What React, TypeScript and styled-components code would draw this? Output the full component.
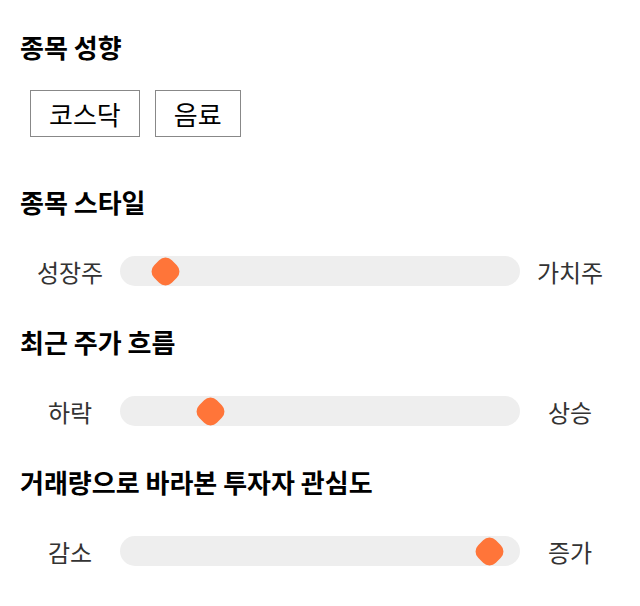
import * as React from 'react'
import styled, { createGlobalStyle } from 'styled-components'

const GlobalStyle = createGlobalStyle`
  body {
    margin: 0;
    background: #fff;
    font-family: "Noto Sans CJK KR", "Noto Sans", sans-serif;
    color: #000;
  }
`

const Page = styled.div`
  padding: 30px 20px 20px;
  width: 600px;
`

const Section = styled.section<{ $gap: number }>`
  display: flex;
  flex-direction: column;
  margin-bottom: ${(p) => p.$gap}px;
`

const Title = styled.h2`
  font-size: 26px;
  font-weight: 700;
  line-height: 34px;
  margin: 0 0 26px;
`

const ChipRow = styled.div`
  display: flex;
  gap: 15px;
  padding: 0 10px;
`

const Chip = styled.button`
  background: #fff;
  border: 1px solid #888;
  color: #000;
  font-family: inherit;
  font-size: 26px;
  height: 47px;
  line-height: 45px;
  padding: 0 18px;
`

const SliderRow = styled.div`
  align-items: center;
  display: grid;
  grid-template-columns: 100px 400px 100px;
  height: 52px;
`

const Label = styled.span`
  color: #333;
  font-size: 24px;
  text-align: center;
`

const Track = styled.div`
  background: #eee;
  border-radius: 15px;
  height: 30px;
  position: relative;
`

const Thumb = styled.div`
  background: #ff7539;
  border-radius: 9px;
  height: 25px;
  margin: -12.5px 0 0 -12.5px;
  position: absolute;
  top: 50%;
  transform: rotate(45deg);
  width: 25px;
`

const sliders = [
  { title: '종목 스타일', left: '성장주', right: '가치주', center: 45 },
  { title: '최근 주가 흐름', left: '하락', right: '상승', center: 90 },
  { title: '거래량으로 바라본 투자자 관심도', left: '감소', right: '증가', center: 369 },
]

export default function App() {
  return (
    <>
      <GlobalStyle />
      <Page>
        <Section $gap={48}>
          <Title>종목 성향</Title>
          <ChipRow>
            <Chip>코스닥</Chip>
            <Chip>음료</Chip>
          </ChipRow>
        </Section>
        {sliders.map((s) => (
          <Section $gap={28} key={s.title}>
            <Title>{s.title}</Title>
            <SliderRow>
              <Label>{s.left}</Label>
              <Track>
                <Thumb style={{ left: s.center }} />
              </Track>
              <Label>{s.right}</Label>
            </SliderRow>
          </Section>
        ))}
      </Page>
    </>
  )
}
